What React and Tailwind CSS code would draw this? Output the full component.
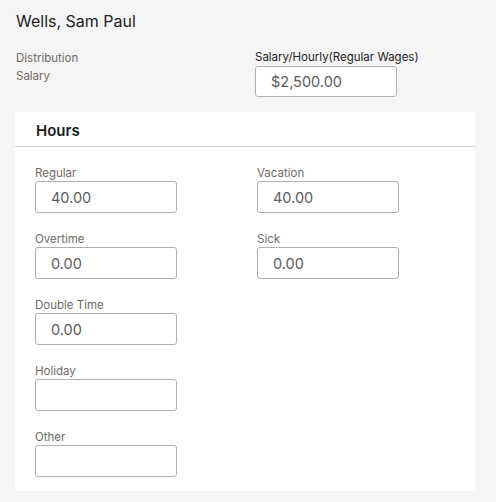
import React from "react";

// Hours form fields, laid out in two columns
const leftFields = [
    { label: "Regular", value: "40.00" },
    { label: "Overtime", value: "0.00" },
    { label: "Double Time", value: "0.00" },
    { label: "Holiday", value: "" },
    { label: "Other", value: "" },
];

const rightFields = [
    { label: "Vacation", value: "40.00" },
    { label: "Sick", value: "0.00" },
];

function Field({ label, value }) {
    return (
        <div className="flex flex-col">
            <label className="text-[11.5px] leading-[16px] text-[#6e6a66]">{label}</label>
            <input
                readOnly
                value={value}
                className="w-[142px] h-[32px] border border-[#b0b0b0] rounded-[3px] bg-white pl-[15px] text-[14.5px] text-[#5c5c5c] outline-none"
            />
        </div>
    );
}

export default function App() {
    return (
        <div className="w-[496px] h-[502px] bg-[#f5f5f5] pt-[9px] pl-[16px] font-['Inter','Noto_Sans',sans-serif] overflow-hidden">
            {/* Header */}
            <h1 className="text-[16px] leading-[24px] text-[#222]">Wells, Sam Paul</h1>

            <div className="flex mt-[16px]">
                <div className="w-[239px] text-[11.5px] leading-[18px] text-[#6e6a66]">
                    <p>Distribution</p>
                    <p>Salary</p>
                </div>
                <div className="flex flex-col">
                    <span className="text-[11.5px] leading-[16px] text-[#222]">Salary/Hourly(Regular Wages)</span>
                    <input
                        readOnly
                        value="$2,500.00"
                        className="mt-[1px] w-[142px] h-[31px] border border-[#b0b0b0] rounded-[3px] bg-white pl-[15px] text-[14.5px] text-[#5c5c5c] outline-none"
                    />
                </div>
            </div>

            {/* Hours panel */}
            <div className="mt-[15px] -ml-[1px] w-[460px] bg-white pb-[14px]">
                <div className="h-[35px] border-b border-[#cfcfcf] pl-[21px] pt-[9px]">
                    <h2 className="text-[15px] leading-[20px] font-semibold text-[#1a1a1a]">Hours</h2>
                </div>
                <div className="flex pl-[20px] pt-[18px]">
                    <div className="w-[222px] flex flex-col gap-[18px]">
                        {leftFields.map((f) => (
                            <Field key={f.label} {...f} />
                        ))}
                    </div>
                    <div className="flex flex-col gap-[18px]">
                        {rightFields.map((f) => (
                            <Field key={f.label} {...f} />
                        ))}
                    </div>
                </div>
            </div>
        </div>
    );
}
